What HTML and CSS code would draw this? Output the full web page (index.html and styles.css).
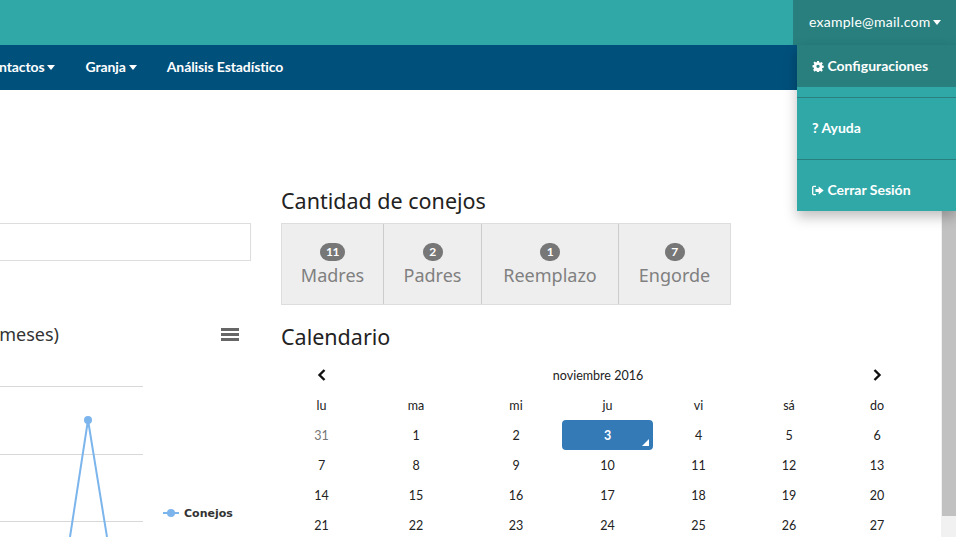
FILE: index.html
```html
<!DOCTYPE html>
<html lang="es">
<head>
    <meta charset="UTF-8">
    <meta name="viewport" content="width=device-width, initial-scale=1.0">
    <title>Panel de conejos</title>
    <link rel="stylesheet" href="styles.css">
</head>
<body>

<header class="site-header">
    <div class="top-bar">
        <div class="user-menu">
            <a class="user-toggle">example@mail.com<span class="caret"></span></a>
            <ul class="user-dropdown">
                <li class="user-item active">
                    <svg class="item-icon" viewBox="0 0 12 12"><path fill="#fff" fill-rule="evenodd" d="M4.9 0h2.200l.3 1.600 1 .4L9.800 1l1.500 1.500-1 1.400.4 1 1.600.3v2.200l-1.600.3-.4 1 1 1.400-1.500 1.500-1.400-1-1 .4-.3 1.600H4.900l-.3-1.600-1-.4-1.400 1L.7 9.600l1-1.400-.4-1L0 6.900V4.700l1.600-.3.4-1-1-1.400L2.500 .5l1.400 1 1-.4zM6 4a1.800 1.800 0 1 0 0 3.600A1.800 1.800 0 0 0 6 4z"/></svg>
                    Configuraciones
                </li>
                <li class="user-divider"></li>
                <li class="user-item"><span class="item-mark">?</span> Ayuda</li>
                <li class="user-divider"></li>
                <li class="user-item">
                    <svg class="item-icon" viewBox="0 0 12 10"><path fill="none" stroke="#fff" stroke-width="1.300" d="M4 .8H1.800A1.100 1.100 0 0 0 .7 1.900v6.200a1.100 1.100 0 0 0 1.100 1.100H4"/><path fill="#fff" d="M3.500 3.500h3.200V1l5 4-5 4V6.500H3.500z"/></svg>
                    Cerrar Sesión
                </li>
            </ul>
        </div>
    </div>
    <nav class="main-nav">
        <a class="nav-link">Contactos<span class="caret"></span></a>
        <a class="nav-link">Granja<span class="caret"></span></a>
        <a class="nav-link">Análisis Estadístico</a>
    </nav>
</header>

<div class="page-row">
    <main class="content">
        <section class="left-col">
            <div class="search-box"></div>
            <div class="chart-head">
                <h3 class="chart-title"><span>Conejos (últimos 6 meses)</span></h3>
                <svg class="chart-menu" viewBox="0 0 18 13"><path fill="#666" d="M0 0h18v3H0zM0 5h18v3H0zM0 10h18v3H0z"/></svg>
            </div>
            <svg class="chart" width="251" height="165" viewBox="0 0 251 165">
                <path stroke="#d8d8d8" d="M0 14.500h143M0 82.500h143M0 149.500h143"/>
                <path fill="none" stroke="#7cb5ec" stroke-width="2" d="M70 165L88 48L107 165"/>
                <circle cx="88" cy="48" r="4" fill="#7cb5ec"/>
                <path stroke="#7cb5ec" stroke-width="2" d="M163 141h16"/>
                <circle cx="171" cy="141" r="4" fill="#7cb5ec"/>
                <text class="legend-text" x="184" y="145">Conejos</text>
            </svg>
        </section>

        <section class="right-col">
            <h2 class="section-title">Cantidad de conejos</h2>
            <div class="count-group">
                <div class="count-cell"><span class="badge">11</span>Madres</div>
                <div class="count-cell"><span class="badge">2</span>Padres</div>
                <div class="count-cell"><span class="badge">1</span>Reemplazo</div>
                <div class="count-cell"><span class="badge">7</span>Engorde</div>
            </div>

            <h2 class="section-title calendar-title">Calendario</h2>
            <div class="calendar">
                <div class="cal-cell"><svg class="chevron" viewBox="0 0 9 12"><path fill="none" stroke="#111" stroke-width="2.400" d="M7.500 1L2.500 6l5 5"/></svg></div>
                <div class="cal-cell cal-month">noviembre 2016</div>
                <div class="cal-cell"><svg class="chevron" viewBox="0 0 9 12"><path fill="none" stroke="#111" stroke-width="2.400" d="M1.500 1l5 5-5 5"/></svg></div>

                <div class="cal-cell">lu</div><div class="cal-cell">ma</div><div class="cal-cell">mi</div><div class="cal-cell">ju</div><div class="cal-cell">vi</div><div class="cal-cell">sá</div><div class="cal-cell">do</div>

                <div class="cal-cell muted">31</div><div class="cal-cell">1</div><div class="cal-cell">2</div><div class="cal-cell today">3</div><div class="cal-cell">4</div><div class="cal-cell">5</div><div class="cal-cell">6</div>

                <div class="cal-cell">7</div><div class="cal-cell">8</div><div class="cal-cell">9</div><div class="cal-cell">10</div><div class="cal-cell">11</div><div class="cal-cell">12</div><div class="cal-cell">13</div>

                <div class="cal-cell">14</div><div class="cal-cell">15</div><div class="cal-cell">16</div><div class="cal-cell">17</div><div class="cal-cell">18</div><div class="cal-cell">19</div><div class="cal-cell">20</div>

                <div class="cal-cell">21</div><div class="cal-cell">22</div><div class="cal-cell">23</div><div class="cal-cell">24</div><div class="cal-cell">25</div><div class="cal-cell">26</div><div class="cal-cell">27</div>
            </div>
        </section>
    </main>

    <div class="scrollbar"><div class="scroll-thumb"></div></div>
</div>

</body>
</html>
```

FILE: styles.css
```css
html, body {
    height: 100%;
}

body {
    font-family: Lato, "Open Sans", sans-serif;
    margin: 0;
    height: 537px;
    overflow: hidden;
    background: #fff;
    color: #222;
    display: flex;
    flex-direction: column;
}

.site-header {
    flex: none;
}

.caret {
    display: inline-block;
    width: 0;
    height: 0;
    margin-left: 3px;
    vertical-align: 2px;
    border-top: 5px solid #fff;
    border-left: 4.500px solid transparent;
    border-right: 4.500px solid transparent;
}

.top-bar {
    height: 45px;
    background-color: #30a8a8;
    display: flex;
    justify-content: flex-end;
}

.user-menu {
    position: relative;
    width: 163px;
    background-color: #287f7e;
}

.user-toggle {
    display: block;
    padding-left: 16px;
    line-height: 44px;
    font-size: 14px;
    letter-spacing: 0.25px;
    color: #fff;
    white-space: nowrap;
}

.user-dropdown {
    position: absolute;
    top: 45px;
    right: 0;
    width: 159px;
    margin: 0;
    padding: 0;
    list-style: none;
    background-color: #30a8a8;
    box-shadow: 0 6px 12px rgba(0, 0, 0, 0.25);
    z-index: 10;
}

.user-item {
    height: 42px;
    line-height: 42px;
    padding-left: 15px;
    font-size: 14px;
    font-weight: 700;
    color: #fff;
    white-space: nowrap;
}

.user-item.active {
    background-color: #287f7e;
}

.user-divider {
    height: 1px;
    margin: 10px 0 9px;
    background-color: #287f7e;
}

.item-icon {
    width: 12px;
    height: 11px;
    vertical-align: -1px;
}

.item-mark {
    font-weight: 900;
}

.main-nav {
    height: 45px;
    background-color: #00507c;
    display: flex;
    gap: 30px;
    margin-left: -18px;
}

.nav-link {
    line-height: 43px;
    font-size: 14px;
    font-weight: 700;
    letter-spacing: -0.1px;
    color: #fff;
    white-space: nowrap;
}

.page-row {
    flex: 1;
    min-height: 0;
    display: flex;
}

.content {
    flex: 1;
    min-width: 0;
    display: flex;
    gap: 30px;
    padding-top: 98px;
    overflow: hidden;
}

.left-col {
    flex: none;
    width: 251px;
}

.search-box {
    height: 36px;
    margin-top: 35px;
    margin-left: -10px;
    border: 1px solid #ddd;
}

.chart-head {
    display: flex;
    justify-content: space-between;
    align-items: center;
    height: 26px;
    margin-top: 60px;
    padding-right: 12px;
}

.chart-title {
    width: 59px;
    display: flex;
    justify-content: flex-end;
    margin: 0;
    font-family: "Noto Sans", sans-serif;
    font-size: 18px;
    font-weight: 400;
    white-space: nowrap;
    color: #333;
}

.chart-menu {
    width: 18px;
    height: 13px;
}

.chart {
    display: block;
    margin-top: 25px;
}

.legend-text {
    font-family: "DejaVu Sans", sans-serif;
    font-size: 11px;
    font-weight: 700;
    fill: #333;
}

.section-title {
    margin: 0 0 9px;
    font-family: "Noto Sans", sans-serif;
    font-size: 21.500px;
    line-height: 26px;
    font-weight: 400;
}

.calendar-title {
    margin-top: 19px;
}

.count-group {
    display: grid;
    grid-template-columns: 101px 98px 137px 112px;
    width: fit-content;
    border: 1px solid #ddd;
    background-color: #eee;
}

.count-cell {
    display: flex;
    flex-direction: column;
    align-items: center;
    padding: 19px 0 15px;
    font-family: "Noto Sans", sans-serif;
    font-size: 18px;
    line-height: 28px;
    color: #808080;
    border-left: 1px solid #ccc;
}

.count-cell:first-child {
    border-left: none;
}

.badge {
    min-width: 8px;
    padding: 0 6px;
    height: 18px;
    line-height: 18px;
    border-radius: 10px;
    background-color: #777;
    color: #fff;
    font-family: Lato, sans-serif;
    font-size: 12px;
    font-weight: 700;
    letter-spacing: -0.5px;
    text-align: center;
}

.calendar {
    display: grid;
    grid-template-columns: 81px 108px 92px 91px 91px 90px 86px;
    grid-auto-rows: 30px;
    margin-top: 10px;
    font-size: 12.500px;
}

.cal-cell {
    display: flex;
    align-items: center;
    justify-content: center;
    color: #222;
}

.cal-month {
    grid-column: span 5;
}

.muted {
    color: #777;
}

.today {
    position: relative;
    background-color: #337ab7;
    color: #fff;
    font-weight: 700;
    border-radius: 4px;
}

.today::after {
    content: "";
    position: absolute;
    right: 4px;
    bottom: 4px;
    border-left: 7px solid transparent;
    border-bottom: 7px solid #fff;
}

.chevron {
    width: 9px;
    height: 12px;
}

.scrollbar {
    flex: none;
    width: 15px;
    background-color: #f1f1f1;
}

.scroll-thumb {
    height: 426px;
    margin-left: 1px;
    background-color: #c1c1c1;
}
```
